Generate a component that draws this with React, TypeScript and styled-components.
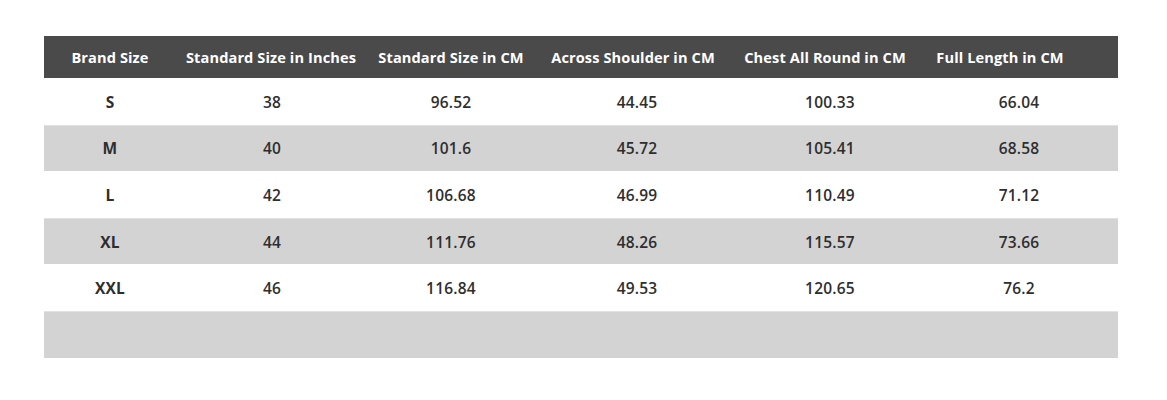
import React from "react";
import styled, { createGlobalStyle } from "styled-components";

const Global = createGlobalStyle`
  html, body { margin: 0; padding: 0; background: #ffffff; }
  body { font-family: "Open Sans", "Liberation Sans", sans-serif; }
`;

const Page = styled.div`
  padding: 36px 49px 0 44px;
`;

const Table = styled.div`
  display: grid;
  grid-template-columns: 132px 192px 166px 206px 180px 1fr;
  grid-template-rows: 42px repeat(6, 46.6px);
  width: 1074px;
`;

const HeadCell = styled.div<{ $shift?: number }>`
  background: #4a4a4a;
  color: #ffffff;
  display: flex;
  align-items: center;
  justify-content: center;
  padding-right: ${(p) => (p.$shift ?? 0) * 2}px;
  font-size: 14.6px;
  font-weight: 700;
  white-space: nowrap;
  letter-spacing: 0.1px;
  padding-bottom: 1px;
`;

const Cell = styled.div<{ $alt: boolean; $bold?: boolean }>`
  background: ${(p) => (p.$alt ? "#d3d3d3" : "#ffffff")};
  border-top: 1px solid ${(p) => (p.$alt ? "#e2e2e2" : "#ffffff")};
  box-sizing: border-box;
  display: flex;
  align-items: center;
  justify-content: center;
  color: #2e2e2e;
  font-size: 15.5px;
  font-weight: ${(p) => (p.$bold ? 700 : 600)};
  letter-spacing: 0.2px;
`;

const headers: { label: string; shift: number }[] = [
  { label: "Brand Size", shift: 0 },
  { label: "Standard Size in Inches", shift: 1 },
  { label: "Standard Size in CM", shift: 0 },
  { label: "Across Shoulder in CM", shift: 4 },
  { label: "Chest All Round in CM", shift: 5 },
  { label: "Full Length in CM", shift: 19 },
];

const rows: string[][] = [
  ["S", "38", "96.52", "44.45", "100.33", "66.04"],
  ["M", "40", "101.6", "45.72", "105.41", "68.58"],
  ["L", "42", "106.68", "46.99", "110.49", "71.12"],
  ["XL", "44", "111.76", "48.26", "115.57", "73.66"],
  ["XXL", "46", "116.84", "49.53", "120.65", "76.2"],
  ["", "", "", "", "", ""],
];

export default function App() {
  return (
    <>
      <Global />
      <Page>
        <Table>
          {headers.map((h) => (
            <HeadCell key={h.label} $shift={h.shift}>
              {h.label}
            </HeadCell>
          ))}
          {rows.map((r, i) =>
            r.map((v, j) => (
              <Cell key={`${i}-${j}`} $alt={i % 2 === 1} $bold={j === 0}>
                {v}
              </Cell>
            ))
          )}
        </Table>
      </Page>
    </>
  );
}
